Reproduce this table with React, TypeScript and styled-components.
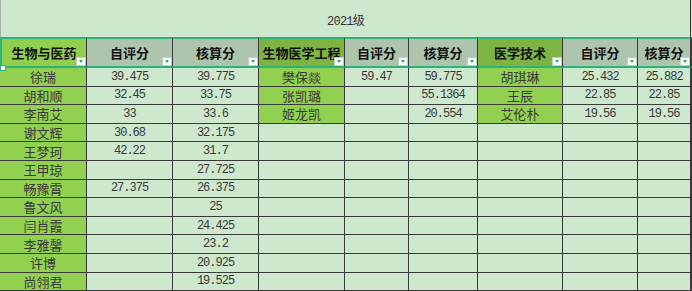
import React from 'react';
import styled, { createGlobalStyle } from 'styled-components';

const Global = createGlobalStyle`
  html, body { margin: 0; padding: 0; background: #cde8cd; overflow: hidden; }
  body { font-family: "Noto Sans CJK SC", sans-serif; }
`;

const LINE = '#3a3a3a';
const SEL = '#2db27a';

const Sheet = styled.div`
  display: grid;
  grid-template-columns: 87px 86px 86px 86px 64px 69px 85px 75px 53px 1fr;
  grid-template-rows: 37px 31px repeat(12, 18.6px);
  width: 100%;
  overflow: hidden;
  background: #cde8cd;
  position: relative;
`;

const Title = styled.div`
  grid-column: 1 / 10;
  box-sizing: border-box;
  border-left: 1px solid #a9b8a9;
  border-right: 1px solid ${LINE};
  display: flex;
  align-items: center;
  justify-content: center;
  padding-top: 3px;
  font-family: "Liberation Mono", "Noto Sans CJK SC", monospace;
  font-size: 12px;
  letter-spacing: -0.8px;
  color: #333;
`;

const Blank = styled.div``;

type HeadKind = 'first' | 'group' | 'score';

const headBg: Record<HeadKind, string> = {
  first: '#92cf4f',
  group: '#7db443',
  score: '#adc4ad',
};

const HeadCell = styled.div<{ $kind: HeadKind; $lead?: boolean }>`
  position: relative;
  box-sizing: border-box;
  background: ${(p) => headBg[p.$kind]};
  border-top: 2px solid ${SEL};
  border-bottom: 2px solid ${SEL};
  border-right: 1px solid ${LINE};
  border-left: ${(p) => (p.$lead ? `2px solid ${SEL}` : 'none')};
  display: flex;
  align-items: center;
  justify-content: center;
  font-size: 13px;
  font-weight: 700;
  color: #111;
  white-space: nowrap;
  overflow: hidden;
  padding-bottom: 1px;
`;

const Filter = styled.span`
  position: absolute;
  right: 0;
  bottom: 0;
  width: 10px;
  height: 9px;
  box-sizing: border-box;
  background: #fff;
  border: 1px solid #c8c8c8;
  display: flex;
  align-items: center;
  justify-content: center;
  &::after {
    content: '';
    border-left: 2.5px solid transparent;
    border-right: 2.5px solid transparent;
    border-top: 3px solid #2aa866;
  }
`;

const Cell = styled.div<{ $green?: boolean }>`
  box-sizing: border-box;
  background: ${(p) => (p.$green ? '#92d050' : '#cde8cd')};
  border-right: 1px solid ${LINE};
  border-bottom: 1px solid ${LINE};
  display: flex;
  align-items: center;
  justify-content: center;
  overflow: hidden;
  white-space: nowrap;
  color: #3a3a3a;
`;

const Name = styled(Cell)`
  font-size: 13px;
  font-family: "Noto Sans CJK SC", sans-serif;
`;

const Num = styled(Cell)`
  font-family: "Liberation Mono", monospace;
  font-size: 12px;
  letter-spacing: -1px;
`;

const Handle = styled.span`
  position: absolute;
  left: 0;
  top: 65px;
  width: 4px;
  height: 4px;
  background: #fff;
  border: 1px solid ${SEL};
`;

type Row = [string, string, string];

const g1: Row[] = [
  ['徐瑞', '39.475', '39.775'],
  ['胡和顺', '32.45', '33.75'],
  ['李南艾', '33', '33.6'],
  ['谢文辉', '30.68', '32.175'],
  ['王梦珂', '42.22', '31.7'],
  ['王甲琼', '', '27.725'],
  ['畅豫霄', '27.375', '26.375'],
  ['鲁文风', '', '25'],
  ['闫肖霞', '', '24.425'],
  ['李雅馨', '', '23.2'],
  ['许博', '', '20.925'],
  ['尚翎君', '', '19.525'],
];

const g2: Row[] = [
  ['樊保燚', '59.47', '59.775'],
  ['张凯璐', '', '55.1364'],
  ['姬龙凯', '', '20.554'],
];

const g3: Row[] = [
  ['胡琪琳', '25.432', '25.882'],
  ['王辰', '22.85', '22.85'],
  ['艾伦朴', '19.56', '19.56'],
];

const groups: { title: string; kind: HeadKind; rows: Row[] }[] = [
  { title: '生物与医药', kind: 'first', rows: g1 },
  { title: '生物医学工程', kind: 'group', rows: g2 },
  { title: '医学技术', kind: 'group', rows: g3 },
];

export default function App() {
  return (
    <>
      <Global />
      <Sheet>
        <Title>2021级</Title>
        <Blank />
        {groups.map((g, gi) => (
          <React.Fragment key={g.title}>
            <HeadCell $kind={g.kind} $lead={gi === 0}>
              {g.title}
              <Filter />
            </HeadCell>
            <HeadCell $kind="score">
              自评分
              <Filter />
            </HeadCell>
            <HeadCell $kind="score">
              核算分
              <Filter />
            </HeadCell>
          </React.Fragment>
        ))}
        <HeadCell $kind="group" />
        {Array.from({ length: 12 }).map((_, ri) => (
          <React.Fragment key={ri}>
            {groups.map((g) => {
              const r = g.rows[ri];
              return (
                <React.Fragment key={g.title}>
                  <Name $green={!!r}>{r ? r[0] : ''}</Name>
                  <Num>{r ? r[1] : ''}</Num>
                  <Num>{r ? r[2] : ''}</Num>
                </React.Fragment>
              );
            })}
            <Name $green={ri < 3} />
          </React.Fragment>
        ))}
        <Handle />
      </Sheet>
    </>
  );
}
